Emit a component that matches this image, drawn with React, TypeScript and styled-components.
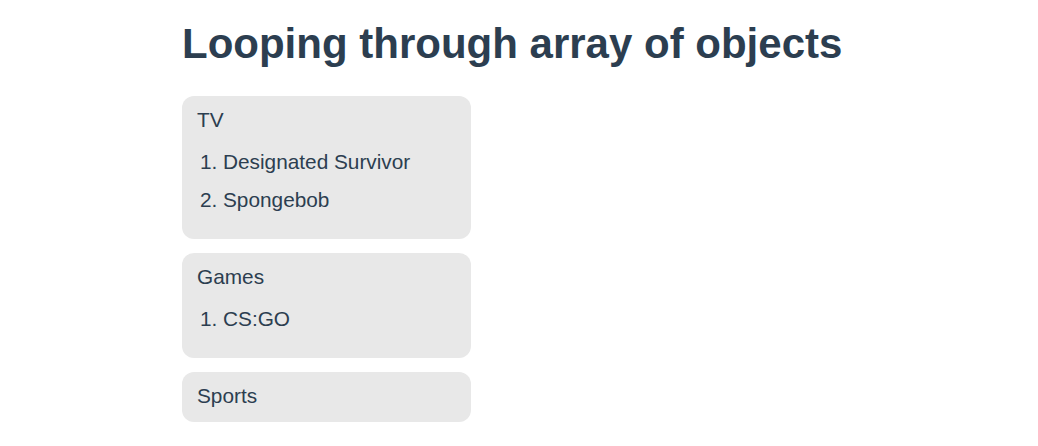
import React from "react";
import styled, { createGlobalStyle } from "styled-components";

const GlobalStyle = createGlobalStyle`
  html, body { margin: 0; padding: 0; background: #ffffff; }
  body {
    font-family: "Liberation Sans", Arial, Helvetica, sans-serif;
    color: #2c3e50;
    -webkit-font-smoothing: antialiased;
  }
`;

const Page = styled.div`
  padding: 21px 0 0 182px;
`;

const Title = styled.h1`
  margin: 0 0 29px;
  font-size: 42px;
  line-height: 46px;
  font-weight: 700;
  color: #2c3e50;
`;

const CardList = styled.div`
  display: flex;
  flex-direction: column;
  gap: 14px;
  width: 289px;
`;

const Card = styled.section`
  background: #e8e8e8;
  border-radius: 12px;
  padding: 12px 15px 15px;
`;

const CardTitle = styled.div`
  font-size: 20.8px;
  line-height: 23px;
`;

const Items = styled.ol`
  margin: 19px 0 13px;
  padding-left: 26px;
  font-size: 20.8px;
  line-height: 23px;
`;

const Item = styled.li`
  & + & { margin-top: 14.5px; }
`;

const data = [
  { name: "TV", items: ["Designated Survivor", "Spongebob"] },
  { name: "Games", items: ["CS:GO"] },
  { name: "Sports", items: [] as string[] },
];

export default function App() {
  return (
    <>
      <GlobalStyle />
      <Page>
        <Title>Looping through array of objects</Title>
        <CardList>
          {data.map((c) => (
            <Card key={c.name}>
              <CardTitle>{c.name}</CardTitle>
              {c.items.length > 0 && (
                <Items>
                  {c.items.map((i) => (
                    <Item key={i}>{i}</Item>
                  ))}
                </Items>
              )}
            </Card>
          ))}
        </CardList>
      </Page>
    </>
  );
}
